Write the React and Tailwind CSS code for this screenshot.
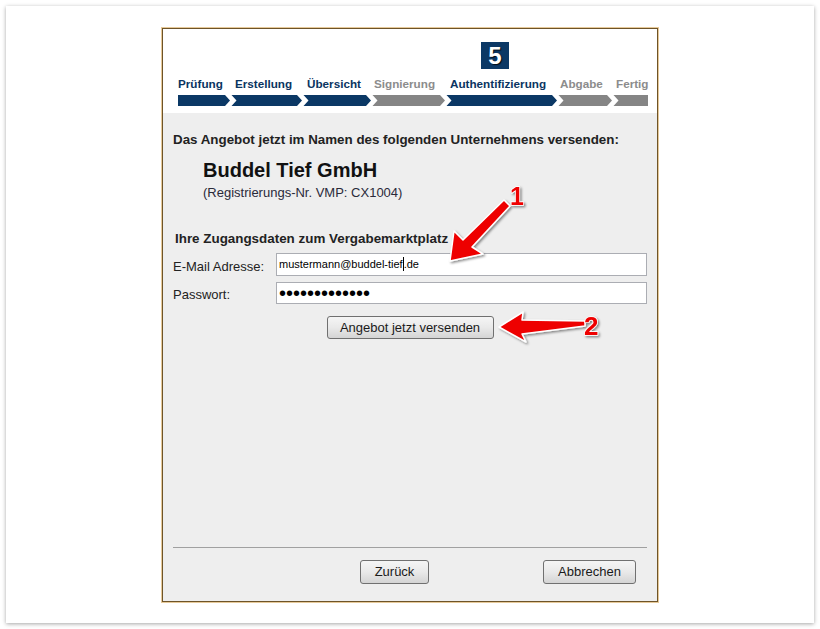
const steps = [
  { label: 'Prüfung', w: 52, pl: 0, done: true },
  { label: 'Erstellung', w: 72, pl: 5, done: true },
  { label: 'Übersicht', w: 69, pl: 5, done: true },
  { label: 'Signierung', w: 74, pl: 3, done: false },
  { label: 'Authentifizierung', w: 112, pl: 5, done: true },
  { label: 'Abgabe', w: 55, pl: 3, done: false },
  { label: 'Fertig', w: 36, pl: 4, done: false },
];

const padClass = { 0: 'pl-0', 3: 'pl-[3px]', 4: 'pl-[4px]', 5: 'pl-[5px]' };
const widthClass = {
  52: 'w-[52px]', 72: 'w-[72px]', 69: 'w-[69px]', 74: 'w-[74px]',
  112: 'w-[112px]', 55: 'w-[55px]', 36: 'w-[36px]',
};

function StepBar() {
  // Pfeilsegmente des Fortschrittsbalkens
  let x = 0;
  const segs = steps.map((s, i) => {
    const x0 = x;
    const x1 = x + s.w;
    x = x1;
    let pts;
    if (i === 0) {
      pts = `${x0},0 ${x1 - 5},0 ${x1},5.5 ${x1 - 5},11 ${x0},11`;
    } else if (i === steps.length - 1) {
      pts = `${x0 + 1.5},0 ${x1},0 ${x1},11 ${x0 + 1.5},11 ${x0 + 6.5},5.5`;
    } else {
      pts = `${x0 + 1.5},0 ${x1 - 5},0 ${x1},5.5 ${x1 - 5},11 ${x0 + 1.5},11 ${x0 + 6.5},5.5`;
    }
    return <polygon key={i} points={pts} fill={s.done ? '#0b3865' : '#858585'} />;
  });
  return (
    <svg width="470" height="11" viewBox="0 0 470 11" className="block">
      {segs}
    </svg>
  );
}

function WinButton({ children, className }) {
  return (
    <button
      className={`rounded-[3px] border border-[#707070] bg-linear-to-b from-[#f5f5f5] via-[#e9e9e9] to-[#d4d4d4] text-[13px] text-[#1a1a1a] ${className}`}
    >
      {children}
    </button>
  );
}

export default function App() {
  return (
    <div className="relative w-[820px] h-[629px] bg-white p-[6px] font-['Liberation_Sans',Arial,sans-serif]">
      <div className="w-[808px] h-[617px] bg-white shadow-[0_1px_4px_rgba(0,0,0,0.35)] flex justify-center pt-[21px]">
        <div className="w-[498px] h-[576px] border border-[#e6c999]">
          <div className="h-full border border-[#6e5428] flex flex-col bg-[#eeeeee]">
            {/* Kopf mit Schritten */}
            <div className="h-[84px] bg-white pl-[15px] pt-[13px]">
              <div className="pl-[303px]">
                <div className="w-[28px] h-[27px] bg-[#0b3865] flex items-center justify-center text-white font-bold text-[24px] leading-none [text-shadow:1px_1px_1px_rgba(0,0,0,0.8)]">
                  5
                </div>
              </div>
              <div className="flex mt-[8px] h-[14px]">
                {steps.map((s) => (
                  <div
                    key={s.label}
                    className={`${widthClass[s.w]} ${padClass[s.pl]} shrink-0 whitespace-nowrap text-[11.7px] leading-[14px] font-bold ${s.done ? 'text-[#0a3461]' : 'text-[#8c8c8c]'}`}
                  >
                    {s.label}
                  </div>
                ))}
              </div>
              <div className="mt-[4px]">
                <StepBar />
              </div>
            </div>

            {/* Inhalt */}
            <div className="flex-1 flex flex-col px-[10px] text-[#222]">
              <div className="mt-[19px] text-[13.35px] leading-[15px] font-bold">
                Das Angebot jetzt im Namen des folgenden Unternehmens versenden:
              </div>
              <div className="pl-[30px] mt-[12px]">
                <div className="text-[20px] leading-[23px] font-bold text-[#111]">Buddel Tief GmbH</div>
                <div className="mt-[3px] text-[13px] leading-[15px] text-[#2a2a3a]">(Registrierungs-Nr. VMP: CX1004)</div>
              </div>
              <div className="mt-[31px] pl-[2px] text-[13.4px] leading-[15px] font-bold">
                Ihre Zugangsdaten zum Vergabemarktplatz
              </div>
              <div className="mt-[6px] flex items-center">
                <div className="w-[103px] text-[13px] pt-[5px]">E-Mail Adresse:</div>
                <div className="w-[371px] h-[23px] bg-white border border-[#abadb3] pl-[2px] flex items-center text-[11px] text-black">
                  mustermann@buddel-tief
                  <span className="inline-block w-[1px] h-[14px] bg-black" />
                  .de
                </div>
              </div>
              <div className="mt-[5px] flex items-center">
                <div className="w-[103px] text-[13px] pt-[3px]">Passwort:</div>
                <div className="w-[371px] h-[22px] bg-white border border-[#abadb3] pl-[2px] flex items-center overflow-hidden text-[20px] leading-none text-black">
                  •••••••••••••
                </div>
              </div>
              <div className="mt-[12px] flex justify-center">
                <WinButton className="w-[167px] h-[23px]">Angebot jetzt versenden</WinButton>
              </div>

              <div className="mt-auto border-t border-[#a0a0a0] flex pt-[12px] pb-[17px]">
                <WinButton className="ml-[187px] w-[69px] h-[24px]">Zurück</WinButton>
                <WinButton className="ml-auto mr-[11px] w-[93px] h-[24px]">Abbrechen</WinButton>
              </div>
            </div>
          </div>
        </div>
      </div>

      {/* Markierungen */}
      <svg
        className="absolute inset-0 pointer-events-none"
        width="820"
        height="629"
        viewBox="0 0 820 629"
      >
        <defs>
          <filter id="sh" x="-20%" y="-20%" width="140%" height="140%">
            <feDropShadow dx="1.5" dy="1.5" stdDeviation="1.2" floodColor="#000" floodOpacity="0.45" />
          </filter>
        </defs>
        <g filter="url(#sh)" fill="#ee0000" stroke="#fff" strokeWidth="1.5" strokeLinejoin="round">
          <polygon points="450,261 483,254 472,247 510,206 504,200 463,240 454,231" />
          <polygon points="499,327 523,312 522,320 585,321 585,326 522,334 526,342" />
          <text
            x="510"
            y="205"
            fontFamily="'Liberation Sans', Arial, sans-serif"
            fontWeight="bold"
            fontSize="25"
            paintOrder="stroke"
          >
            1
          </text>
          <text
            x="584"
            y="335"
            fontFamily="'Liberation Sans', Arial, sans-serif"
            fontWeight="bold"
            fontSize="26"
            paintOrder="stroke"
          >
            2
          </text>
        </g>
      </svg>
    </div>
  );
}
